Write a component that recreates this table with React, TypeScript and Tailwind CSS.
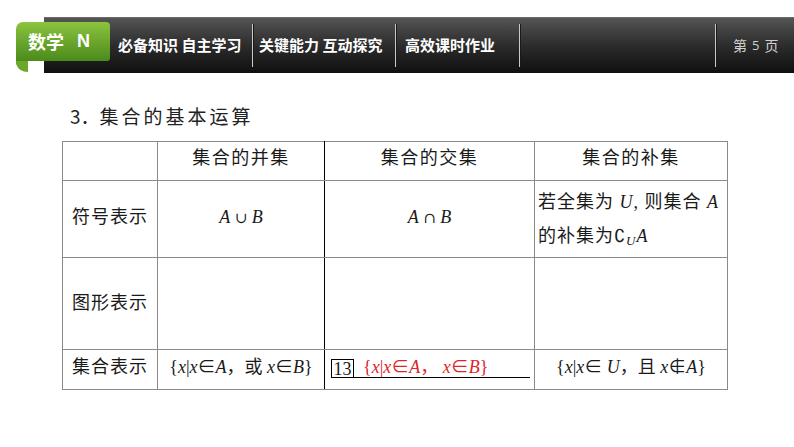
import React from "react";

const cjk = "font-['Noto_Sans_CJK_SC',sans-serif]";
const serif = "font-['Liberation_Serif','Noto_Sans_CJK_SC',serif]";

function V({ children }: { children: React.ReactNode }) {
  return <span className="italic">{children}</span>;
}

function Op({ children }: { children: React.ReactNode }) {
  return <span className="font-['DejaVu_Serif',serif] text-[15px]">{children}</span>;
}

function Sep() {
  return (
    <div className="flex h-[43px] shrink-0 self-center">
      <div className="w-px bg-[#c9c9c9]" />
      <div className="w-px bg-[#1a1a1a]" />
    </div>
  );
}

const navItems = [
  { label: "必备知识 自主学习", cls: "w-[208px] pl-[74px]" },
  { label: "关键能力 互动探究", cls: "w-[141px] pl-[5px]" },
  { label: "高效课时作业", cls: "w-[122px] pl-[8px]" },
];

export default function App() {
  return (
    <div className={`relative h-[447px] w-[794px] overflow-hidden bg-white ${cjk}`}>
      <header className="relative h-[73px] pt-[17px]">
        <div className="ml-[44px] flex h-[56px] border-t border-[#6b6b6b] bg-gradient-to-b from-[#555555] via-[#2c2c2c] to-[#101010]">
          {navItems.map((item) => (
            <React.Fragment key={item.label}>
              <div className={`flex shrink-0 items-center text-[15px] font-bold text-white ${item.cls}`}>{item.label}</div>
              <Sep />
            </React.Fragment>
          ))}
          <div className="flex-1" />
          <Sep />
          <div className="flex w-[77px] shrink-0 items-center gap-[5px] whitespace-nowrap pl-[16px] text-[14px] text-[#d0d0d0]">
            <span>第</span>
            <span className="font-['Open_Sans',sans-serif] text-[13px]">5</span>
            <span>页</span>
          </div>
        </div>

        {/* green subject tab sits over the bar */}
        <div className="absolute left-[16px] top-[22px]">
          <div className="flex h-[39px] w-[94px] items-center gap-[13px] rounded-tl-[7px] rounded-tr-[4px] rounded-br-[3px] bg-gradient-to-b from-[#8cc43e] to-[#4b8a1c] pl-[12px] text-[18px] font-bold text-white">
            <span>数学</span>
            <span className="font-['Liberation_Sans',sans-serif]">N</span>
          </div>
          <svg width="13" height="12" viewBox="0 0 13 12" className="block">
            <path d="M0 0 H12 V11 Q3 11 0 3 Z" fill="#6aa82a" />
          </svg>
        </div>
      </header>

      <h2 className="ml-[70px] mt-[33px] text-[19px] leading-[20px] tracking-[3px] text-[#222]">
        <span className="tracking-normal">3．</span>集合的基本运算
      </h2>

      <table className={`ml-[62px] mt-[15px] table-fixed border-collapse text-[18px] text-[#1a1a1a] ${serif}`}>
        <colgroup>
          <col className="w-[95px]" />
          <col className="w-[167px]" />
          <col className="w-[210px]" />
          <col className="w-[193px]" />
        </colgroup>
        <tbody>
          <tr className="h-[39px]">
            <td className="border border-[#8a8a8a]" />
            <td className="border border-[#8a8a8a] border-r-black pb-[6px] text-center tracking-[1.5px]">集合的并集</td>
            <td className="border border-[#8a8a8a] pb-[6px] text-center tracking-[1.5px]">集合的交集</td>
            <td className="border border-[#8a8a8a] pb-[6px] text-center tracking-[1.5px]">集合的补集</td>
          </tr>
          <tr className="h-[77px]">
            <td className="border border-[#8a8a8a] pb-[4px] pl-[9px] tracking-[1px]">符号表示</td>
            <td className="border border-[#8a8a8a] border-r-black pb-[4px] text-center">
              <V>A</V> <Op>∪</Op> <V>B</V>
            </td>
            <td className="border border-[#8a8a8a] pb-[4px] text-center">
              <V>A</V> <Op>∩</Op> <V>B</V>
            </td>
            <td className="border border-[#8a8a8a] pl-[3px] leading-[34px] tracking-[1px]">
              若全集为 <V>U</V>, 则集合 <V>A</V>
              <br />
              的补集为∁<sub className="text-[13px]"><V>U</V></sub><V>A</V>
            </td>
          </tr>
          <tr className="h-[92px]">
            <td className="border border-[#8a8a8a] pl-[9px] tracking-[1px]">图形表示</td>
            <td className="border border-[#8a8a8a] border-r-black" />
            <td className="border border-[#8a8a8a]" />
            <td className="border border-[#8a8a8a]" />
          </tr>
          <tr className="h-[40px]">
            <td className="border border-[#8a8a8a] pb-[4px] pl-[9px] tracking-[1px]">集合表示</td>
            <td className="border border-[#8a8a8a] border-r-black pb-[4px] text-center whitespace-nowrap">
              {"{"}<V>x</V>|<V>x</V>∈<V>A</V>，或 <V>x</V>∈<V>B</V>{"}"}
            </td>
            <td className="border border-[#8a8a8a] pb-[4px] pl-[6px]">
              <div className="flex items-end whitespace-nowrap">
                <span className="flex h-[19px] w-[23px] items-center justify-center border border-black text-[18px] leading-none">13</span>
                <span className="w-[176px] border-b border-black pl-[9px] leading-[20px] text-[#e0242b]">
                  {"{"}<V>x</V>|<V>x</V>∈<V>A</V>， <V>x</V>∈<V>B</V>{"}"}
                </span>
              </div>
            </td>
            <td className="border border-[#8a8a8a] pb-[4px] text-center whitespace-nowrap">
              {"{"}<V>x</V>|<V>x</V>∈ <V>U</V>，且 <V>x</V>∉<V>A</V>{"}"}
            </td>
          </tr>
        </tbody>
      </table>
    </div>
  );
}
